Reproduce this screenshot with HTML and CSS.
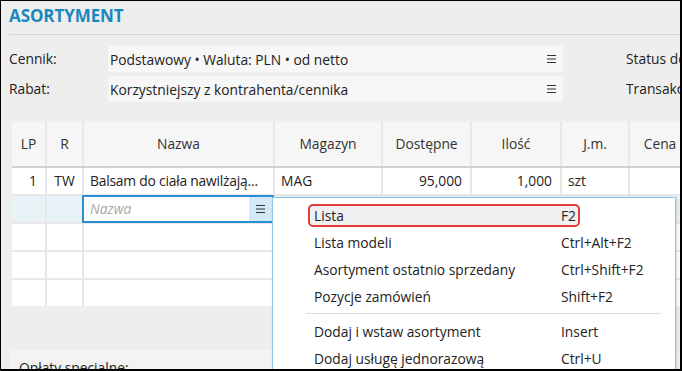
FILE: index.html
```html
<!DOCTYPE html>
<html lang="pl">
<head>
  <meta charset="UTF-8">
  <title>Asortyment</title>
  <link rel="stylesheet" href="styles.css">
</head>
<body>

<div class="frame">
  <div class="title">ASORTYMENT</div>

  <div class="form">
    <div class="label">Cennik:</div>
    <div class="field">
      <span>Podstawowy • Waluta: PLN • od netto</span>
      <svg class="burger" width="9" height="8" viewBox="0 0 9 8"><path d="M0 .5h9M0 4h9M0 7.5h9" stroke="#333" stroke-width="1.2"/></svg>
    </div>
    <div class="label side">Status dokumentu:</div>

    <div class="label">Rabat:</div>
    <div class="field">
      <span>Korzystniejszy z kontrahenta/cennika</span>
      <svg class="burger" width="9" height="8" viewBox="0 0 9 8"><path d="M0 .5h9M0 4h9M0 7.5h9" stroke="#333" stroke-width="1.2"/></svg>
    </div>
    <div class="label side">Transakcja:</div>
  </div>

  <div class="grid">
    <div class="row head">
      <div class="cell c">LP</div>
      <div class="cell c">R</div>
      <div class="cell c">Nazwa</div>
      <div class="cell c">Magazyn</div>
      <div class="cell c">Dostępne</div>
      <div class="cell c">Ilość</div>
      <div class="cell c">J.m.</div>
      <div class="cell c">Cena</div>
    </div>
    <div class="row">
      <div class="cell r">1</div>
      <div class="cell c">TW</div>
      <div class="cell name">Balsam do ciała nawilżają...</div>
      <div class="cell">MAG</div>
      <div class="cell r">95,000</div>
      <div class="cell r">1,000</div>
      <div class="cell">szt</div>
      <div class="cell"></div>
    </div>
    <div class="row current">
      <div class="cell"></div>
      <div class="cell"></div>
      <div class="cell editor">
        <span class="placeholder">Nazwa</span>
        <span class="btn">
          <svg width="9" height="8" viewBox="0 0 9 8"><path d="M0 .5h9M0 4h9M0 7.5h9" stroke="#333" stroke-width="1.2"/></svg>
        </span>
      </div>
      <div class="cell"></div>
      <div class="cell"></div>
      <div class="cell"></div>
      <div class="cell"></div>
      <div class="cell"></div>
    </div>
    <div class="row">
      <div class="cell"></div><div class="cell"></div><div class="cell"></div><div class="cell"></div>
      <div class="cell"></div><div class="cell"></div><div class="cell"></div><div class="cell"></div>
    </div>
    <div class="row">
      <div class="cell"></div><div class="cell"></div><div class="cell"></div><div class="cell"></div>
      <div class="cell"></div><div class="cell"></div><div class="cell"></div><div class="cell"></div>
    </div>
    <div class="row">
      <div class="cell"></div><div class="cell"></div><div class="cell"></div><div class="cell"></div>
      <div class="cell"></div><div class="cell"></div><div class="cell"></div><div class="cell"></div>
    </div>
  </div>

  <div class="fees">Opłaty specjalne:</div>

  <!-- menu pod przyciskiem w kolumnie Nazwa -->
  <div class="menu">
    <div class="item active"><span>Lista</span><span>F2</span></div>
    <div class="item"><span>Lista modeli</span><span>Ctrl+Alt+F2</span></div>
    <div class="item"><span>Asortyment ostatnio sprzedany</span><span>Ctrl+Shift+F2</span></div>
    <div class="item"><span>Pozycje zamówień</span><span>Shift+F2</span></div>
    <div class="sep"></div>
    <div class="item"><span>Dodaj i wstaw asortyment</span><span>Insert</span></div>
    <div class="item"><span>Dodaj usługę jednorazową</span><span>Ctrl+U</span></div>
  </div>
</div>

</body>
</html>
```

FILE: styles.css
```css
body {
  margin: 0;
  background-color: #ffffff;
}
.frame {
  position: relative;
  width: 682px;
  height: 371px;
  box-sizing: border-box;
  border-style: solid;
  border-color: #000000;
  border-width: 1px 2px 2px 1px;
  background-color: #eeeeee;
  overflow: hidden;
  font-family: "Open Sans", "Noto Sans", sans-serif;
  font-size: 13.8px;
  color: #222222;
}
.title {
  margin-left: 8px;
  height: 33px;
  line-height: 30px;
  border-bottom: 1px solid #d8d8d8;
  font-size: 17px;
  font-weight: 700;
  color: #1a87bd;
  letter-spacing: -0.1px;
}
.form {
  display: grid;
  grid-template-columns: 99px 455px 63px max-content;
  row-gap: 4px;
  margin: 11px 0 0 8px;
  white-space: nowrap;
}
.label {
  height: 26px;
  line-height: 26px;
}
.field {
  display: flex;
  align-items: center;
  justify-content: space-between;
  height: 26px;
  padding: 0 7px 0 2px;
  background-color: #f7f7f7;
}
.side {
  grid-column: 4;
}
.grid {
  display: flex;
  flex-direction: column;
  gap: 2px;
  margin: 20px 0 0 11px;
  background-color: #e8e8e8;
}
.row {
  display: grid;
  grid-template-columns: 33px 35px 189px 106px 87px 88px 66px 60px;
  column-gap: 2px;
  height: 26px;
}
.cell {
  background-color: #ffffff;
  line-height: 26px;
  padding: 0 6px;
  white-space: nowrap;
  overflow: hidden;
}
.name {
  letter-spacing: -0.2px;
}
.head {
  height: 44px;
  border-bottom: 2px solid #d0d0d0;
  margin-bottom: -2px;
}
.head .cell {
  background-color: #f6f6f6;
  line-height: 44px;
  color: #333333;
}
.c {
  text-align: center;
}
.r {
  text-align: right;
  padding-right: 8px;
}
.current .cell {
  background-color: #e8f2f7;
}
.current .editor {
  display: flex;
  justify-content: space-between;
  padding: 0;
  margin-left: -1px;
  background-color: #ffffff;
  border: 1px solid #2a8fd4;
  box-shadow: 0 0 0 1px #2a8fd4;
  position: relative;
  z-index: 1;
}
.placeholder {
  padding-left: 6px;
  line-height: 24px;
  font-style: italic;
  color: #a8a8a8;
}
.btn {
  display: flex;
  align-items: center;
  justify-content: center;
  width: 23px;
  background-color: #d3e9f6;
}
.fees {
  margin: 44px 0 0 9px;
  padding: 8px 9px;
  background-color: #f3f3f3;
}
.menu {
  position: absolute;
  left: 271px;
  top: 196px;
  width: 404px;
  height: 200px;
  box-sizing: border-box;
  display: flex;
  flex-direction: column;
  padding-top: 4px;
  background-color: #ffffff;
  border: 1px solid #8ec4e8;
  box-shadow: 1px 1px 3px rgba(0, 0, 0, 0.15);
  z-index: 2;
  white-space: nowrap;
}
.item {
  display: grid;
  grid-template-columns: 247px auto;
  flex: none;
  width: 272px;
  height: 23px;
  box-sizing: border-box;
  margin: 2px 0 2px 35px;
  padding-left: 6px;
  line-height: 23px;
}
.item.active {
  background-color: #f0f0f0;
  border: 2px solid #e53a3e;
  border-radius: 5px;
  padding-left: 4px;
  line-height: 19px;
}
.sep {
  flex: none;
  height: 1px;
  margin: 3px 14px 4px 33px;
  background-color: #dddddd;
}
```
